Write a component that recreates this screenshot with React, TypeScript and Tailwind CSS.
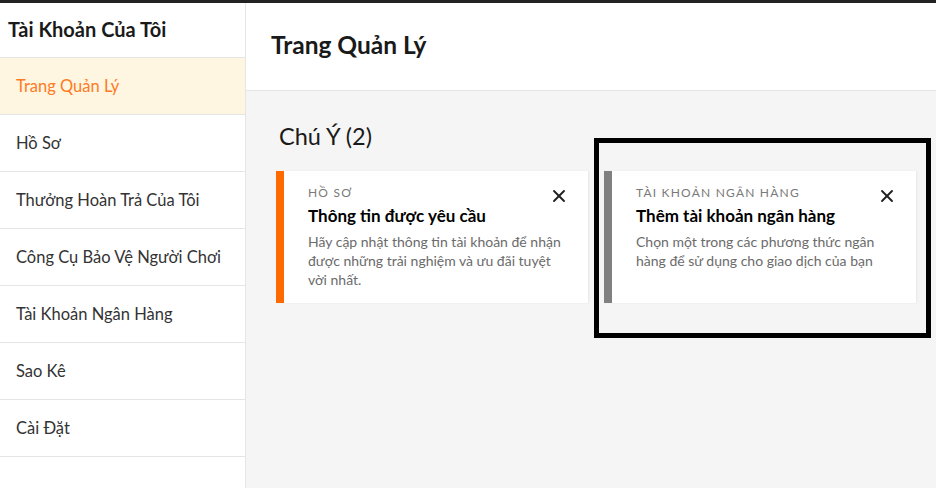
import { X } from "lucide-react";

const menu = [
  "Trang Quản Lý",
  "Hồ Sơ",
  "Thưởng Hoàn Trả Của Tôi",
  "Công Cụ Bảo Vệ Người Chơi",
  "Tài Khoản Ngân Hàng",
  "Sao Kê",
  "Cài Đặt",
];

const notices = [
  {
    tag: "Hồ Sơ",
    title: "Thông tin được yêu cầu",
    body: "Hãy cập nhật thông tin tài khoản để nhận được những trải nghiệm và ưu đãi tuyệt vời nhất.",
    bar: "bg-[#ff6a00]",
  },
  {
    tag: "Tài Khoản Ngân Hàng",
    title: "Thêm tài khoản ngân hàng",
    body: "Chọn một trong các phương thức ngân hàng để sử dụng cho giao dịch của bạn",
    bar: "bg-[#808080]",
  },
];

export default function App() {
  return (
    <div className="flex h-[488px] w-[936px] flex-col overflow-hidden bg-white font-['Lato',sans-serif] text-[#222]">
      <div className="h-[3px] bg-[#222]" />
      <div className="flex flex-1">
        <aside className="w-[246px] shrink-0 border-r border-[#e5e5e5]">
          <div className="flex h-[55px] items-center border-b border-[#e5e5e5] px-2 pb-[2px] text-[20px] font-bold text-[#1a1a1a]">
            Tài Khoản Của Tôi
          </div>
          {menu.map((item, i) => (
            <div
              key={item}
              className={
                i === 0
                  ? "flex h-[57px] items-center border-b border-[#e5e5e5] bg-[#fef6e1] px-4 text-[16.5px] text-[#ff7a1f]"
                  : "flex h-[57px] items-center border-b border-[#e5e5e5] px-4 text-[16.5px] text-[#333]"
              }
            >
              {item}
            </div>
          ))}
        </aside>

        <main className="relative flex flex-1 flex-col bg-[#f5f5f5]">
          <div className="flex h-[88px] items-center border-b border-[#e5e5e5] bg-white pl-[25px] pb-[2px] text-[24.5px] font-bold text-[#1a1a1a]">
            Trang Quản Lý
          </div>
          <div className="px-[30px] pt-[29px]">
            <h2 className="pl-[3px] text-[23.5px] leading-[32px] text-[#1a1a1a]">Chú Ý (2)</h2>
            <div className="mt-[19px] grid grid-cols-[312px_312px] gap-4">
              {notices.map((n) => (
                <div key={n.title} className="flex h-[132px] bg-white shadow-[1px_0_2px_rgba(0,0,0,0.06)]">
                  <div className={`w-2 shrink-0 ${n.bar}`} />
                  <div className="relative flex-1 pl-6 pr-[20px] pt-[14px]">
                    <div className="text-[12px] uppercase leading-[16px] tracking-[1.2px] text-[#7a7a7a]">
                      {n.tag}
                    </div>
                    <div className="mt-[4px] text-[17px] font-bold leading-[21px] text-black">{n.title}</div>
                    <p className="mt-[6px] text-[14px] leading-[19px] text-[#6b6b6b]">{n.body}</p>
                    <X
                      className="absolute right-[19px] top-[15px] h-[20px] w-[20px] text-[#222]"
                      strokeWidth={2.3}
                    />
                  </div>
                </div>
              ))}
            </div>
          </div>
          <div className="pointer-events-none absolute left-[348px] top-[135px] h-[200px] w-[337px] border-[5px] border-black" />
        </main>
      </div>
    </div>
  );
}
